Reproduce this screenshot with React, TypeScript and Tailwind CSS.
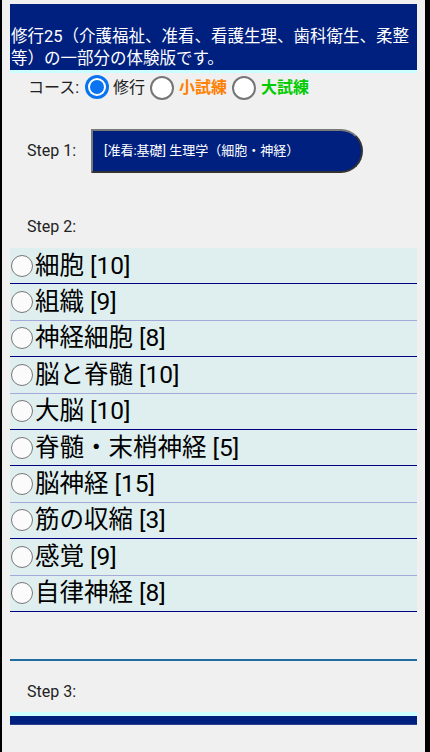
import React from "react";

const items: { label: string; dark: boolean }[] = [
  { label: "細胞 [10]", dark: true },
  { label: "組織 [9]", dark: false },
  { label: "神経細胞 [8]", dark: true },
  { label: "脳と脊髄 [10]", dark: false },
  { label: "大脳 [10]", dark: true },
  { label: "脊髄・末梢神経 [5]", dark: true },
  { label: "脳神経 [15]", dark: false },
  { label: "筋の収縮 [3]", dark: true },
  { label: "感覚 [9]", dark: false },
  { label: "自律神経 [8]", dark: true },
];

function Radio({ checked, small }: { checked?: boolean; small?: boolean }) {
  if (checked) {
    return (
      <span className="inline-flex items-center justify-center w-[24px] h-[24px] rounded-full bg-[#0a74f0] shrink-0">
        <span className="inline-flex items-center justify-center w-[18px] h-[18px] rounded-full bg-white">
          <span className="block w-[14px] h-[14px] rounded-full bg-[#0a74f0]" />
        </span>
      </span>
    );
  }
  return (
    <span
      className={
        small
          ? "block w-[22px] h-[22px] rounded-full border-[1.5px] border-[#777777] bg-[#fbfbfb] shrink-0"
          : "block w-[24px] h-[24px] rounded-full border-2 border-[#767676] bg-white shrink-0"
      }
    />
  );
}

export default function App() {
  return (
    <div
      className="h-[752px] overflow-hidden bg-[#f0f0f0] border-l-2 border-r-[5px] border-black px-[8px] pt-[4px] text-[#222222]"
      style={{ fontFamily: "Roboto, 'Noto Sans CJK JP', sans-serif" }}
    >
      <div className="bg-[#002080] border-b-[3px] border-[#ccffff] pt-[22px] pl-[1px] text-white text-[16.5px] leading-[22px]">
        修行25（介護福祉、准看、看護生理、歯科衛生、柔整等）の一部分の体験版です。
      </div>

      <div className="h-[30px] flex items-center pl-[18px] text-[16px]">
        <span>コース:</span>
        <span className="ml-[6px] mr-[4px]">
          <Radio checked />
        </span>
        <span>修行</span>
        <span className="ml-[5px] mr-[5px]">
          <Radio />
        </span>
        <span className="text-[#ff8000] font-bold">小試練</span>
        <span className="ml-[5px] mr-[5px]">
          <Radio />
        </span>
        <span className="text-[#00cc00] font-bold">大試練</span>
      </div>

      <div className="mt-[26px] flex items-center">
        <span className="ml-[17px] w-[64px] text-[16px] leading-[20px]">Step 1:</span>
        <div className="w-[272px] h-[44px] bg-[#002080] border-2 border-t-[#7a7a7a] border-l-[#7a7a7a] border-r-[#333333] border-b-[#333333] rounded-r-full flex items-center pl-[11px] text-white text-[13px]">
          [准看:基礎] 生理学（細胞・神経）
        </div>
      </div>

      <div className="mt-[44px] ml-[17px] text-[16px] leading-[20px]">Step 2:</div>

      <div className="mt-[11px]">
        {items.map((it) => (
          <div
            key={it.label}
            className={
              "h-[36.4px] bg-[#dfefef] flex items-center border-b " +
              (it.dark ? "border-[#000080]" : "border-[#a3a9d8]")
            }
          >
            <span className="ml-[1px] mr-[2px]">
              <Radio small />
            </span>
            <span className="text-[24.5px] leading-[30px] text-black">{it.label}</span>
          </div>
        ))}
      </div>

      <div className="mt-[47px] h-[2px] bg-[#1f6d9f]" />

      <div className="mt-[21px] ml-[17px] text-[16px] leading-[20px]">Step 3:</div>

      <div className="mt-[10px] h-[4px] bg-[#ccffff]" />
      <div className="h-[9px] bg-[#002080] border-b border-[#2a3f8f]" />
    </div>
  );
}
